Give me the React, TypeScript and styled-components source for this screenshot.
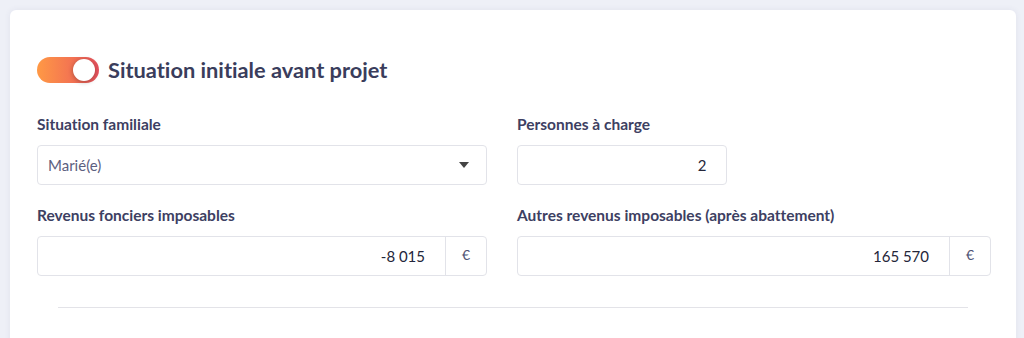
import React, { FC } from 'react'
import styled, { createGlobalStyle } from 'styled-components'

const GlobalStyle = createGlobalStyle`
  html, body {
    margin: 0;
    padding: 0;
    background: #eef0f7;
    font-family: 'Source Sans Pro', Lato, 'Liberation Sans', sans-serif;
    font-variant-ligatures: none;
  }
`

const Page = styled.div`
  padding: 10px 8px 0 10px;
  height: 328px;
  overflow: hidden;
`

const Card = styled.div`
  background: white;
  border-radius: 6px;
  box-shadow: 0 0 6px rgba(60, 64, 110, 0.08);
  padding: 47px 25px 40px 27px;
  min-height: 400px;
`

const Header = styled.div`
  display: flex;
  align-items: center;
  gap: 9px;
  margin-bottom: 31px;
`

const Toggle = styled.div<{ on?: boolean }>`
  width: 62px;
  height: 26px;
  border-radius: 13px;
  background: linear-gradient(90deg, #ff9945 0%, #f06a55 70%, #e6505e 100%);
  position: relative;
  flex-shrink: 0;
`

const Knob = styled.span`
  position: absolute;
  top: 2px;
  right: 4px;
  width: 22px;
  height: 22px;
  border-radius: 50%;
  background: #fff;
  box-shadow: 0 1px 5px rgba(0, 0, 0, 0.3);
`

const Title = styled.h2`
  margin: 0;
  font-size: 21.8px;
  line-height: 26px;
  font-weight: 700;
  color: #3a3d5c;
`

const Grid = styled.div`
  display: grid;
  grid-template-columns: 450px 1fr;
  column-gap: 30px;
  row-gap: 20px;
`

const Field = styled.div``

const Label = styled.div`
  font-size: 15.5px;
  line-height: 21px;
  font-weight: 700;
  color: #3d4062;
  margin-bottom: 10px;
`

const Box = styled.div<{ w?: number }>`
  display: flex;
  align-items: stretch;
  height: 40px;
  box-sizing: border-box;
  width: ${p => (p.w ? `${p.w}px` : '100%')};
  border: 1px solid #e2e3e9;
  border-radius: 4px;
  background: #fff;
  font-size: 15px;
`

const Value = styled.div<{ right?: boolean; muted?: boolean }>`
  flex: 1;
  display: flex;
  align-items: center;
  justify-content: ${p => (p.right ? 'flex-end' : 'flex-start')};
  padding: 0 20px 0 10px;
  color: ${p => (p.muted ? '#5c6080' : '#24263a')};
  letter-spacing: ${p => (p.right ? '-0.4px' : '0')};
`

const Suffix = styled.div`
  width: 41px;
  border-left: 1px solid #e2e3e9;
  display: flex;
  align-items: center;
  justify-content: center;
  color: #4f5374;
  font-size: 14px;
  padding-bottom: 3px;
  box-sizing: border-box;
`

const Caret = styled.span`
  align-self: center;
  margin-right: 17px;
  width: 0;
  height: 0;
  border-left: 5px solid transparent;
  border-right: 5px solid transparent;
  border-top: 6px solid #444;
`

const Divider = styled.hr`
  border: 0;
  border-top: 1px solid #e3e3e8;
  margin: 31px 23px 0 21px;
`

const App: FC = () => (
  <>
    <GlobalStyle />
    <Page>
      <Card>
        <Header>
          <Toggle on>
            <Knob />
          </Toggle>
          <Title>Situation initiale avant projet</Title>
        </Header>
        <Grid>
          <Field>
            <Label>Situation familiale</Label>
            <Box>
              <Value muted>Marié(e)</Value>
              <Caret />
            </Box>
          </Field>
          <Field>
            <Label>Personnes à charge</Label>
            <Box w={210}>
              <Value right>2</Value>
            </Box>
          </Field>
          <Field>
            <Label>Revenus fonciers imposables</Label>
            <Box>
              <Value right>-8{'\u202f'}015</Value>
              <Suffix>€</Suffix>
            </Box>
          </Field>
          <Field>
            <Label>Autres revenus imposables (après abattement)</Label>
            <Box>
              <Value right>165{'\u202f'}570</Value>
              <Suffix>€</Suffix>
            </Box>
          </Field>
        </Grid>
        <Divider />
      </Card>
    </Page>
  </>
)

export default App
